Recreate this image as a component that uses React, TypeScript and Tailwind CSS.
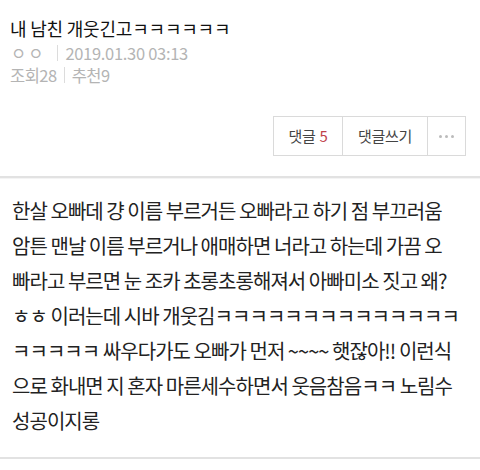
const FONT = "font-['Noto_Sans_CJK_KR','Noto_Sans',sans-serif]";

const BODY = [
  '한살 오빠데 걍 이름 부르거든 오빠라고 하기 점 부끄러움',
  '암튼 맨날 이름 부르거나 애매하면 너라고 하는데 가끔 오',
  '빠라고 부르면 눈 조카 초롱초롱해져서 아빠미소 짓고 왜?',
  'ㅎㅎ 이러는데 시바 개웃김ㅋㅋㅋㅋㅋㅋㅋㅋㅋㅋㅋㅋㅋㅋ',
  'ㅋㅋㅋㅋㅋ 싸우다가도 오빠가 먼저 ~~~~ 햇잖아!! 이런식',
  '으로 화내면 지 혼자 마른세수하면서 웃음참음ㅋㅋ 노림수',
  '성공이지롱',
];

export default function App() {
  return (
    <div className={`${FONT} h-[470px] w-[480px] overflow-hidden bg-white`}>
      {/* header */}
      <div className="px-[10px] pt-[16px]">
        <h1 className="text-[18px] leading-[24px] font-normal tracking-[-0.2px] text-[#111]">
          내 남친 개웃긴고ㅋㅋㅋㅋㅋㅋ
        </h1>
        <div className="mt-[3px] flex h-[20px] items-center text-[16.5px] leading-[20px] text-[#b4b4b4] tracking-[-0.3px]">
          <span className="pl-[1px] tracking-[2px]">ㅇㅇ</span>
          <span className="mr-[7px] ml-[12px] h-[16px] w-px bg-[#dcdcdc]" />
          <span>2019.01.30 03:13</span>
        </div>
        <div className="mt-[2px] flex h-[20px] items-center text-[16.5px] leading-[20px] text-[#b4b4b4] tracking-[-0.5px]">
          <span>조회28</span>
          <span className="mx-[7px] h-[16px] w-px bg-[#dcdcdc]" />
          <span>추천9</span>
        </div>
      </div>

      {/* actions */}
      <div className="mt-[31px] flex justify-end pr-[14px]">
        <div className="flex h-[40px] border border-[#dadada] text-[15px] tracking-[-0.3px]">
          <button className="flex w-[68px] items-center justify-center gap-[4px] text-[#444]">
            댓글<span className="text-[#c0424a]">5</span>
          </button>
          <button className="flex w-[85px] items-center justify-center border-l border-[#dadada] text-[#444]">
            댓글쓰기
          </button>
          <button className="flex w-[38px] items-center justify-center gap-[3px] border-l border-[#dadada]">
            <span className="h-[3px] w-[3px] rounded-full bg-[#bbb]" />
            <span className="h-[3px] w-[3px] rounded-full bg-[#bbb]" />
            <span className="h-[3px] w-[3px] rounded-full bg-[#bbb]" />
          </button>
        </div>
      </div>

      <div className="mt-[20px] h-[2px] bg-[#e2e2e2]" />
      <div className="h-px bg-[#f4f4f4]" />

      {/* body */}
      <div className="px-[12px] pt-[14px] text-[20px] leading-[35px] tracking-[-0.95px] text-[#222]">
        {BODY.map((l, i) => (
          <p key={i} className="whitespace-nowrap">
            {l}
          </p>
        ))}
      </div>

      <div className="mt-[19px] h-[2px] bg-[#e2e2e2]" />
    </div>
  );
}
